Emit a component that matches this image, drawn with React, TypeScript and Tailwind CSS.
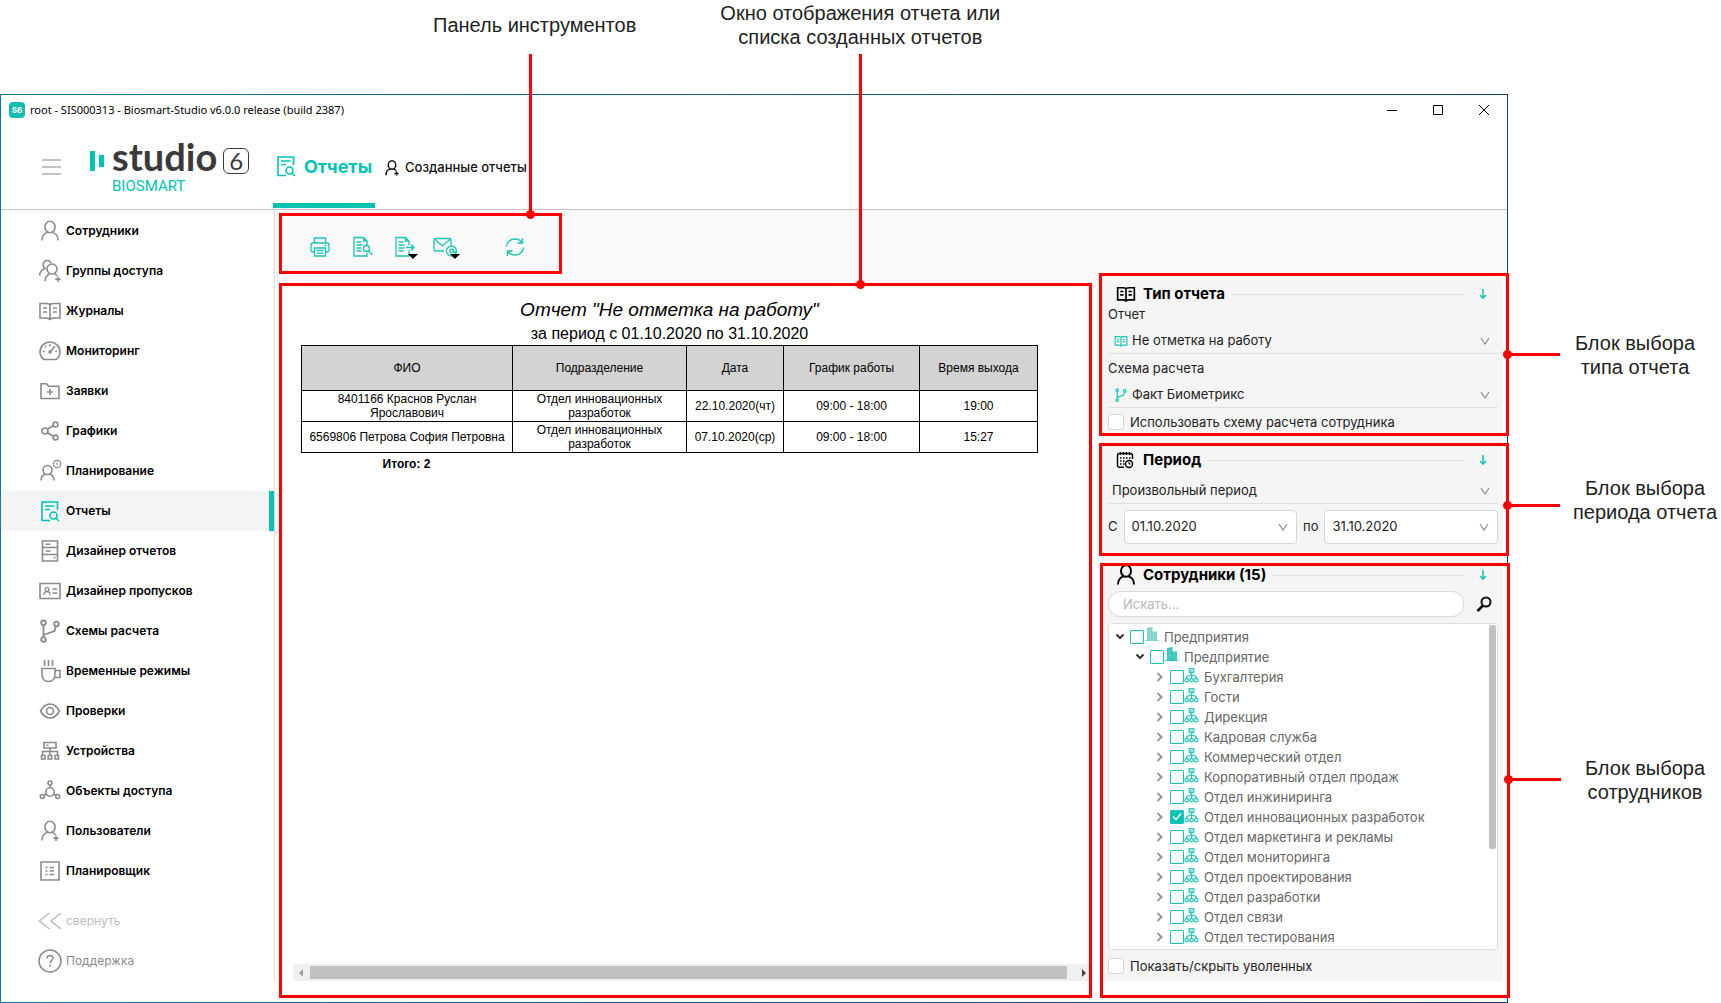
import type { ReactNode } from "react";

type IconProps = { className?: string };

function Svg({ box, className = "", width = 2, children }: { box: string; className?: string; width?: number; children: ReactNode }) {
  return (
    <svg viewBox={box} className={`shrink-0 ${className}`} fill="none" stroke="currentColor" strokeWidth={width} aria-hidden="true">
      {children}
    </svg>
  );
}

/* Sidebar icons, 24x24 grid */
const UserIcon = ({ className = "size-6" }: IconProps) => (
  <Svg box="0 0 24 24" className={className} width={1.6}>
    <ellipse cx="12" cy="8" rx="5" ry="5.8" />
    <path d="M4 21.5c0-4.5 2.5-7.5 5.5-8M20 21.5c0-4.5-2.5-7.5-5.5-8" />
  </Svg>
);

const UserPlusIcon = ({ className = "size-6" }: IconProps) => (
  <Svg box="0 0 24 24" className={className} width={1.6}>
    <ellipse cx="12" cy="8" rx="5" ry="5.8" />
    <path d="M4 21.5c0-4.5 2.5-7.5 5.5-8M14.5 13.5c1.5.5 2.5 1.5 3 2.5M18 16.5v5.5M15.2 19.2h5.6" />
  </Svg>
);

const GroupIcon = ({ className = "size-6" }: IconProps) => (
  <Svg box="0 0 24 24" className={className} width={1.6}>
    <circle cx="14" cy="10" r="5" />
    <path d="M13 4C12 1.500 9.500 1 7.500 1.800 5 3 4.500 6 6 8.500l1 1C4 10.500 2 13 1.500 16.500M7 22c.3-3.500 2-6 4.500-7M16.500 14.500c1 .5 2 1.500 2.500 2.500M20 17.500V23M17.200 20.200h5.600" />
  </Svg>
);

const BookIcon = ({ className = "size-6" }: IconProps) => (
  <Svg box="0 0 24 24" className={className} width={1.6}>
    <path d="M12 5.500C11 4.500 9.500 4.500 8 4.500H2v14.500h7.500l2.500 1.500 2.500-1.500H22V4.500h-6c-1.500 0-3 0-4 1v14.500M5 9h4M5 13h4M15 9h4M15 13h4" />
  </Svg>
);

const GaugeIcon = () => (
  <Svg box="0 0 24 24" className="size-6" width={1.6}>
    <path d="M6 20.500C3.500 18.800 2 16 2 12.800 2 7.200 6.500 3 12 3s10 4.200 10 9.800c0 3.200-1.500 6-4 7.700zM12 5.200v2M7 7l1 1.300M4.800 12.500h2M17.200 12.500h2M17 7.200L12 13" />
    <circle cx="12" cy="13" r="1" />
  </Svg>
);

const FolderPlusIcon = () => (
  <Svg box="0 0 24 24" className="size-6" width={1.6}>
    <path d="M3 19.500V4.800h5.500l2 2.500H21v12.200zM12 10v6M9 13h6" />
  </Svg>
);

const ShareIcon = () => (
  <Svg box="0 0 24 24" className="size-6" width={1.6}>
    <circle cx="7" cy="12" r="3" />
    <circle cx="17.5" cy="5.5" r="2.4" />
    <circle cx="17.5" cy="18.5" r="2.4" />
    <path d="M9.500 10.300l5.800-3.500M9.500 13.700l5.800 3.500" />
  </Svg>
);

const PlanningIcon = () => (
  <Svg box="0 0 24 24" className="size-6" width={1.6}>
    <circle cx="9.5" cy="11" r="4.5" />
    <path d="M3 21.500c0-3.500 1.500-5.500 4-6.500M16 21.500c0-3.500-1.500-5.500-4-6.500" />
    <circle cx="19" cy="5" r="3.7" strokeWidth={1.2} />
    <path d="M19 3v2l1.200 1" strokeWidth={1} />
  </Svg>
);

const ReportIcon = ({ className = "size-6" }: IconProps) => (
  <Svg box="0 0 24 24" className={className} width={1.6}>
    <path d="M12 21.500H4V3h15.500v8M7 7h9.500M7 10.500h5" />
    <circle cx="15.5" cy="16.5" r="3.5" />
    <path d="M18 19l3 3" />
  </Svg>
);

const DrawersIcon = () => (
  <Svg box="0 0 24 24" className="size-6" width={1.6}>
    <path d="M4.500 2h15v20h-15zM4.500 8.500h15M4.500 15.500h15M7.500 5.300h5M7.500 12h5M15.500 18.800h2" />
  </Svg>
);

const BadgeIcon = () => (
  <Svg box="0 0 24 24" className="size-6" width={1.6}>
    <path d="M2 4.500h20v15H2zM14.500 10h4.500M14.500 14h4.500" />
    <circle cx="9" cy="10.5" r="1.9" strokeWidth={1.3} />
    <path d="M6 16c0-2 1.200-3.300 3-3.300s3 1.300 3 3.300" strokeWidth={1.3} />
  </Svg>
);

const BranchIcon = ({ className = "size-6" }: IconProps) => (
  <Svg box="0 0 24 24" className={className} width={1.8}>
    <circle cx="5.5" cy="3.8" r="2.3" />
    <circle cx="5.5" cy="20.5" r="2.3" />
    <circle cx="18.5" cy="5" r="2.3" />
    <path d="M5.500 6v12M5.500 16l11-4 1.500-5" />
  </Svg>
);

const CupIcon = () => (
  <Svg box="0 0 24 24" className="size-6" width={1.6}>
    <path d="M4 9.500h13v6c0 4-2.500 7-6.500 7S4 19.500 4 15.500zM17 11.500h5v7h-5.500M6.500 1v6M10.500 1v6M14.500 1v6" />
  </Svg>
);

const EyeIcon = () => (
  <Svg box="0 0 24 24" className="size-6" width={1.6}>
    <path d="M2.500 12C5 7.500 8.500 5 12 5s7 2.500 9.500 7c-2.500 4.500-6 7-9.500 7s-7-2.500-9.500-7z" />
    <circle cx="12" cy="12" r="3.5" />
  </Svg>
);

const DevicesIcon = () => (
  <Svg box="0 0 24 24" className="size-6" width={1.6}>
    <path d="M6 3.500h12v5.500H6zM8.500 6.200h2M12 9v7M4.500 16v-3.500h15V16M3.500 16.500h3.500v3.500H3.500zM10.200 16.500h3.500v3.500h-3.500zM17 16.500h3.500v3.500H17z" />
  </Svg>
);

const ObjectsIcon = () => (
  <Svg box="0 0 24 24" className="size-6" width={1.6}>
    <circle cx="12" cy="13" r="4.2" />
    <circle cx="12" cy="4" r="2" />
    <circle cx="4.3" cy="17.5" r="2" />
    <circle cx="19.7" cy="17.5" r="2" />
    <path d="M12 6v3M6 16.500l2.500-1.500M18 16.500L15.500 15" />
  </Svg>
);

const SchedulerIcon = () => (
  <Svg box="0 0 24 24" className="size-6" width={1.6}>
    <path d="M3 3h18v18H3zM7.500 8.500h2M7.500 12h2M7.500 15.500h2M11.500 8.500H16M11.500 12H16M11.500 15.500H16" />
  </Svg>
);

/* Toolbar icons */
const PrintIcon = () => (
  <Svg box="0 0 22 22" className="size-[22px]" width={1.3}>
    <path d="M5.500 7V2h11v5M5 16H3.500C2.500 16 2 15.500 2 14.500v-5C2 8 2.800 7 4 7h14c1.200 0 2 1 2 2.500v5c0 1-.5 1.500-1.500 1.500H17M5.500 12h11v8h-11zM7.500 14.500h7M7.500 17.200h7M15.500 9.500h2" />
  </Svg>
);

const PreviewIcon = () => (
  <Svg box="0 0 22 22" className="size-[22px]" width={1.3}>
    <path d="M15 17v3H2V1.500h9.500L15 5v4M11.500 1.500V5H15M4.500 6h5M4.500 9h6M4.500 12h5M4.500 15h5" />
    <circle cx="14.5" cy="12.5" r="3" />
    <path d="M16.500 15l4 4" />
  </Svg>
);

const ExportIcon = () => (
  <Svg box="0 0 22 22" className="size-[22px]" width={1.3}>
    <path d="M15 14v6H2V1.500h9.500L15 5v4M11.500 1.500V5H15M4.500 6h5M4.500 9h6M4.500 12h6M4.500 15h5M12 11.500h8M17 8.500l3 3-3 3" />
  </Svg>
);

const MailIcon = () => (
  <Svg box="0 0 26 22" className="h-[22px] w-[26px]" width={1.3}>
    <path d="M12 15H3.500C2.500 15 2 14.500 2 13.500V4c0-1 .5-1.500 1.500-1.500h14c1 0 1.500.5 1.500 1.500v5M2.500 3l8 7 8-7" />
    <circle cx="19.5" cy="15" r="5" />
    <circle cx="19.5" cy="15" r="1.8" />
    <path d="M21.500 13v2.500c0 1.500 2.500 1.500 3-.5" />
  </Svg>
);

const RefreshIcon = () => (
  <Svg box="0 0 22 22" className="size-[22px]" width={1.4}>
    <path d="M2.500 10.500C2.800 6 6.500 3 11 3c3 0 5.500 1.300 7 3.500M18.500 2v5h-5M19.500 11.500c-.3 4.500-4 7.500-8.500 7.500-3 0-5.500-1.300-7-3.500M3.500 20v-5h5" />
  </Svg>
);

/* Caret under toolbar buttons that open a menu */
const MenuCaret = () => (
  <span className="absolute -right-0.5 -bottom-px border-x-[5px] border-t-[5px] border-x-transparent border-t-black" />
);

/* Right panel icons */
const CalendarIcon = () => (
  <Svg box="0 0 18 18" className="size-[18px] text-black" width={1.4}>
    <path d="M8 16.300H3.500C2.300 16.300 1.500 15.500 1.500 14.300V4.500c0-1.200.8-2 2-2h11c1.200 0 2 .8 2 2V8M4.500 1v3M7.500 1v3M10.500 1v3M13.500 1v3" />
    <path d="M4 7h1.500M7 7h1.500M10 7h1.500M13 7h1.500M4 10h1.500M7 10h1.500M4 13h1.500M7 13h1.500" />
    <circle cx="13" cy="13" r="3.5" />
    <path d="M13 11v2h1.500" strokeWidth={1} />
  </Svg>
);

const DownArrowIcon = () => (
  <Svg box="0 0 8 12" className="h-3 w-2 text-[#1cc4b4]" width={1.6}>
    <path d="M4 1v9M1 7l3 3 3-3" />
  </Svg>
);

const ChevronIcon = ({ className = "" }: IconProps) => (
  <Svg box="0 0 10 8" className={`h-2 w-2.5 text-[#8c8c8c] ${className}`} width={1.2}>
    <path d="M1 1l4 6 4-6" />
  </Svg>
);

const SearchIcon = () => (
  <Svg box="0 0 16 16" className="size-4 text-[#111]" width={2}>
    <circle cx="10" cy="6" r="4.5" />
    <path d="M7 9.500L1.500 15" strokeWidth={2.6} />
  </Svg>
);

const BuildingIcon = ({ className = "" }: IconProps) => (
  <svg viewBox="0 0 14 14" className={`h-3.5 w-3.5 shrink-0 self-start ${className}`} aria-hidden="true">
    <path d="M2 13V1l5.500-1v4.500H12V13h1.500v1H0v-1z" fill="currentColor" />
    <path d="M3.500 3.500H6M3.500 6H6M3.500 8.500H6M3.500 11H6M8 7h2.500M8 9h2.500M8 11h2.500" stroke="#fff" strokeWidth=".6" strokeDasharray="1 .5" opacity=".5" />
  </svg>
);

const OrgIcon = () => (
  <Svg box="0 0 15 15" className="-mt-1 size-[15px] text-[#2fc7b9]" width={1.3}>
    <path d="M5.300.7h4.400v3.800H5.300zM6.500 2.600h2M7.500 4.600V10M2.700 10.500V8.500L7.500 7l4.800 1.500v2" />
    <circle cx="2.7" cy="12.2" r="1.7" />
    <circle cx="7.5" cy="12.2" r="1.7" />
    <circle cx="12.3" cy="12.2" r="1.7" />
  </Svg>
);

const NAV = [
  { label: "Сотрудники", icon: UserIcon },
  { label: "Группы доступа", icon: GroupIcon },
  { label: "Журналы", icon: BookIcon },
  { label: "Мониторинг", icon: GaugeIcon },
  { label: "Заявки", icon: FolderPlusIcon },
  { label: "Графики", icon: ShareIcon },
  { label: "Планирование", icon: PlanningIcon },
  { label: "Отчеты", icon: ReportIcon, active: true },
  { label: "Дизайнер отчетов", icon: DrawersIcon },
  { label: "Дизайнер пропусков", icon: BadgeIcon },
  { label: "Схемы расчета", icon: BranchIcon },
  { label: "Временные режимы", icon: CupIcon },
  { label: "Проверки", icon: EyeIcon },
  { label: "Устройства", icon: DevicesIcon },
  { label: "Объекты доступа", icon: ObjectsIcon },
  { label: "Пользователи", icon: UserPlusIcon },
  { label: "Планировщик", icon: SchedulerIcon },
];

const ROWS = [
  ["8401166 Краснов Руслан Ярославович", "Отдел инновационных разработок", "22.10.2020(чт)", "09:00 - 18:00", "19:00"],
  ["6569806 Петрова София Петровна", "Отдел инновационных разработок", "07.10.2020(ср)", "09:00 - 18:00", "15:27"],
];

const DEPARTMENTS = [
  "Бухгалтерия",
  "Гости",
  "Дирекция",
  "Кадровая служба",
  "Коммерческий отдел",
  "Корпоративный отдел продаж",
  "Отдел инжиниринга",
  "Отдел инновационных разработок",
  "Отдел маркетинга и рекламы",
  "Отдел мониторинга",
  "Отдел проектирования",
  "Отдел разработки",
  "Отдел связи",
  "Отдел тестирования",
];

function Dot({ className }: { className: string }) {
  return <span className={`absolute size-[9px] rounded-full bg-[#ff0000] ${className}`} />;
}

/* Red outline around a block with a leader line to its caption on the right */
function Frame({ className, leader }: { className: string; leader: string }) {
  return (
    <div className={`pointer-events-none absolute z-10 border-[3px] border-[#ff0000] ${className}`}>
      <span className={`absolute left-full h-[3px] w-[54px] bg-[#ff0000] ${leader}`}>
        <Dot className="-top-[3px] -left-[3px]" />
      </span>
    </div>
  );
}

function SectionTitle({ icon, children }: { icon: ReactNode; children: ReactNode }) {
  return (
    <div className="flex h-5 items-center pl-2">
      <span className="flex w-[27px] items-center text-black">{icon}</span>
      <h2 className="text-[15px] leading-5 font-bold text-black">{children}</h2>
      <span className="mr-[13px] ml-1.5 h-px flex-1 bg-[#e2e2e2]" />
      <button type="button" aria-label="Свернуть блок" className="mr-[11px]">
        <DownArrowIcon />
      </button>
    </div>
  );
}

function SelectRow({ id, label, value, icon }: { id: string; label?: string; value: string; icon?: ReactNode }) {
  return (
    <div className="relative flex h-[30px] items-center border-b border-[#e0e0e0] pt-1">
      {icon && <span className="ml-1.5 flex w-3.5 items-center text-[#1cc4b4]">{icon}</span>}
      <select id={id} aria-label={label} className="h-6 flex-1 appearance-none bg-transparent pl-1 text-[13px] text-[#222]">
        <option>{value}</option>
      </select>
      <ChevronIcon className="pointer-events-none absolute right-2" />
    </div>
  );
}

function DateField({ id, value, label }: { id: string; value: string; label: string }) {
  return (
    <>
      <label htmlFor={id} className="text-[13px]">{label}</label>
      <div className="flex h-full min-w-0 flex-1 items-center rounded border border-[#d6d6d6] bg-white pr-2">
        <input id={id} defaultValue={value} className="min-w-0 flex-1 bg-transparent pl-[7px] text-[13px] text-[#222] outline-none" />
        <button type="button" aria-label="Открыть календарь"><ChevronIcon /></button>
      </div>
    </>
  );
}

function CheckRow({ id, children }: { id: string; children: ReactNode }) {
  return (
    <div className="flex h-4 items-center gap-1.5">
      <input id={id} type="checkbox" className="size-4 appearance-none rounded-xs border border-[#d6d6d6] bg-white" />
      <label htmlFor={id} className="text-[13px] leading-4 text-[#222]">{children}</label>
    </div>
  );
}

function TreeRow({ id, label, level, open, checked, icon }: { id: string; label: string; level: 0 | 1 | 2; open?: boolean; checked?: boolean; icon: ReactNode }) {
  const indent = ["pl-1.5", "pl-[26px]", "pl-[46px]"][level];
  return (
    <li className={`flex h-5 items-center ${indent}`}>
      <button type="button" aria-label={open ? "Свернуть" : "Развернуть"} className="flex w-[15px] justify-start">
        {open ? (
          <Svg box="0 0 10 8" className="h-2 w-2.5 text-[#333]" width={2}>
            <path d="M1.500 1.500L5 5l3.500-3.500" />
          </Svg>
        ) : (
          <Svg box="0 0 8 10" className="ml-px h-2.5 w-2 text-[#999]" width={2}>
            <path d="M1.500 1L5.500 5 1.500 9" />
          </Svg>
        )}
      </button>
      <span className="relative flex">
        <input
          id={id}
          type="checkbox"
          defaultChecked={checked}
          className="peer size-3.5 appearance-none rounded-[1px] border border-[#1cc4b4] bg-white checked:bg-[#00c4b3]"
        />
        <Svg box="0 0 14 14" className="pointer-events-none absolute inset-0 hidden size-3.5 text-white peer-checked:block" width={1.5}>
          <path d="M3 6.500L6 9.500l5-6" />
        </Svg>
      </span>
      {icon}
      <label htmlFor={id} className="ml-[5px] text-[13px] leading-5 whitespace-nowrap text-[#666]">{label}</label>
    </li>
  );
}

function Header() {
  return (
    <header className="flex h-[85px] border-b border-[#c4c4c4]">
      <button type="button" aria-label="Меню" className="mt-[34px] ml-[41px] flex h-4 w-[19px] flex-col justify-between self-start">
        <span className="h-0.5 w-full bg-[#c2c2c2]" />
        <span className="h-0.5 w-full bg-[#c2c2c2]" />
        <span className="h-0.5 w-full bg-[#c2c2c2]" />
      </button>
      <div className="ml-7 flex w-[184px] pt-[9px]">
        <div className="ml-px flex gap-1 pt-[17px]">
          <span className="h-5 w-[5px] bg-[#00c4b3]" />
          <span className="mt-1 h-3 w-[5px] bg-[#00c4b3]" />
        </div>
        <div className="ml-2">
          <div className="flex h-11 items-center gap-1.5">
            <span className="font-[Lato] text-[38px] leading-11 font-bold text-[#3a3a3a]">studio</span>
            <span className="mt-2.5 flex h-[26px] w-[26px] items-center justify-center rounded-md border border-[#3a3a3a] font-[Lato] text-[24px] leading-6 text-[#3a3a3a]">6</span>
          </div>
          <div className="font-[Roboto] text-[15px] leading-4 text-[#00c4b3]">BIOSMART</div>
        </div>
      </div>
      <nav className="flex">
        <a href="#reports" className="relative flex w-[102px] items-center gap-1.5 pb-0.5 pl-px text-[18px] font-bold text-[#00c4b3]">
          <ReportIcon className="size-6" />
          Отчеты
          <span className="absolute inset-x-0 bottom-px h-[5px] bg-[#00c4b3]" />
        </a>
        <a href="#created" className="ml-2 flex items-center gap-1 pt-px text-[13px] font-medium whitespace-nowrap text-[#111]">
          <UserPlusIcon className="size-[18px] stroke-2" />
          Созданные отчеты
        </a>
      </nav>
    </header>
  );
}

function Sidebar() {
  return (
    <aside className="mb-[21px] w-[274px] shrink-0 border-r border-[#dedede] pt-px">
      <nav>
        {NAV.map(item => {
          const Icon = item.icon;
          return (
            <a
              key={item.label}
              href="#nav"
              className={`flex h-10 items-center gap-1 pl-[37px] text-[12px] font-semibold text-black ${item.active ? "border-r-[5px] border-[#00c4b3] bg-[#f4f4f4]" : ""}`}
            >
              <span className={item.active ? "text-[#00c4b3]" : "text-[#8a8a8a]"}>
                <Icon />
              </span>
              {item.label}
            </a>
          );
        })}
      </nav>
      <button type="button" className="mt-2.5 flex h-10 w-full items-center gap-1 pl-[37px] text-[12px] text-[#bdbdbd]">
        <Svg box="0 0 24 24" className="size-6" width={1.6}>
          <path d="M11.500 4L1.500 12l10 8M23 4l-10 8 10 8" />
        </Svg>
        свернуть
      </button>
      <a href="#support" className="flex h-10 items-center gap-1 pl-[37px] text-[12px] text-[#8a8a8a]">
        <Svg box="0 0 24 24" className="size-6" width={1.5}>
          <circle cx="12" cy="12" r="11" />
          <path d="M9 9.500C9 7.500 10.200 6.500 12 6.500s3 1.200 3 2.800c0 2-3 2.200-3 5M12 15.800v2" />
        </Svg>
        Поддержка
      </a>
    </aside>
  );
}

function Toolbar() {
  return (
    <div className="h-[71px] bg-[#f9f9f9] pt-[3px] pl-1">
      <div className="relative flex h-[61px] w-[283px] items-center border-[3px] border-[#ff0000] pt-1.5 pl-[27px] text-[#1cc4b4]">
        <button type="button" aria-label="Печать"><PrintIcon /></button>
        <button type="button" aria-label="Просмотр" className="ml-[21px]"><PreviewIcon /></button>
        <button type="button" aria-label="Экспорт" className="relative ml-5">
          <ExportIcon />
          <MenuCaret />
        </button>
        <button type="button" aria-label="Отправить" className="relative ml-4">
          <MailIcon />
          <MenuCaret />
        </button>
        <button type="button" aria-label="Обновить" className="ml-[46px]"><RefreshIcon /></button>
        <span className="absolute -top-[162px] left-[247px] h-[162px] w-[3px] bg-[#ff0000]">
          <Dot className="-bottom-[3px] -left-[3px]" />
        </span>
      </div>
    </div>
  );
}

function Report() {
  return (
    <section className="relative mt-0.5 mr-[9px] mb-1 ml-1 flex min-w-0 flex-1 flex-col border-[3px] border-[#ff0000] pl-[11px] font-['Liberation_Sans',Arial,sans-serif] text-black">
      <span className="absolute -top-[232px] left-[577px] h-[232px] w-[3px] bg-[#ff0000]">
        <Dot className="-bottom-[3px] -left-[3px]" />
      </span>
      <div className="ml-2 w-[737px] pt-3 text-center">
        <h1 className="text-[19px] leading-6 italic">Отчет "Не отметка на работу"</h1>
        <p className="mt-px text-[16px] leading-[22px]">за период с 01.10.2020 по 31.10.2020</p>
        <table className="w-full table-fixed border-collapse text-[12px] leading-[14px]">
          <colgroup>
            <col className="w-[211px]" />
            <col className="w-[174px]" />
            <col className="w-[97px]" />
            <col className="w-[136px]" />
            <col />
          </colgroup>
          <thead>
            <tr className="h-[45px] bg-[#d3d3d3]">
              {["ФИО", "Подразделение", "Дата", "График работы", "Время выхода"].map(h => (
                <th key={h} className="border border-black font-normal">{h}</th>
              ))}
            </tr>
          </thead>
          <tbody>
            {ROWS.map(row => (
              <tr key={row[0]} className="h-[31px]">
                {row.map((cell, i) => (
                  <td key={i} className={`border border-black ${i === 1 ? "px-5" : "px-1"}`}>{cell}</td>
                ))}
              </tr>
            ))}
          </tbody>
        </table>
        <p className="w-[211px] pt-[3px] text-[12px] leading-4 font-bold">Итого: 2</p>
      </div>
      <div className="mt-auto mb-3.5 flex h-[17px] items-center bg-[#f0f0f0] pr-[3px] pl-1.5">
        <span className="border-y-4 border-r-4 border-y-transparent border-r-[#a0a0a0]" />
        <span className="mr-[15px] ml-[7px] h-[13px] flex-1 bg-[#c1c1c1]" />
        <span className="border-y-4 border-l-4 border-y-transparent border-l-[#444]" />
      </div>
    </section>
  );
}

function SidePanel() {
  return (
    <aside className="mr-1 mb-[21px] flex w-[402px] shrink-0 flex-col bg-[#f5f5f5]">
      <section className="relative pt-[3px] pr-[5px] pb-2.5 pl-[7px]">
        <Frame className="-top-2 -right-1.5 bottom-1 -left-0.5" leader="top-[77px]" />
        <SectionTitle icon={<BookIcon className="size-5 stroke-2" />}>Тип отчета</SectionTitle>
        <label htmlFor="report-type" className="block text-[13px] leading-5 text-[#222]">Отчет</label>
        <SelectRow id="report-type" value="Не отметка на работу" icon={<BookIcon className="size-3.5 stroke-2" />} />
        <label htmlFor="scheme" className="mt-1 block text-[13px] leading-5 text-[#222]">Схема расчета</label>
        <SelectRow id="scheme" value="Факт Биометрикс" icon={<BranchIcon className="size-3.5 stroke-2" />} />
        <div className="mt-1.5">
          <CheckRow id="own-scheme">Использовать схему расчета сотрудника</CheckRow>
        </div>
      </section>

      <section className="relative pt-2.5 pr-[5px] pb-4 pl-[7px]">
        <Frame className="top-[3px] -right-1.5 bottom-1 -left-0.5" leader="top-[58px]" />
        <SectionTitle icon={<CalendarIcon />}>Период</SectionTitle>
        <div className="mt-1">
          <SelectRow id="period" label="Период" value="Произвольный период" />
        </div>
        <div className="mt-1.5 flex h-[34px] items-center gap-1.5">
          <DateField id="from" label="С" value="01.10.2020" />
          <DateField id="to" label="по" value="31.10.2020" />
        </div>
      </section>

      <section className="relative flex min-h-0 flex-1 flex-col pt-[5px] pr-[5px] pb-[7px] pl-[7px]">
        <Frame className="top-[3px] -right-[7px] -bottom-[17px] -left-px" leader="top-[212px]" />
        <SectionTitle icon={<UserIcon className="-ml-0.5 size-6 stroke-2" />}>Сотрудники (15)</SectionTitle>
        <div className="mt-1.5 flex items-center">
          <input
            type="search"
            aria-label="Поиск сотрудников"
            placeholder="Искать..."
            className="h-[26px] min-w-0 flex-1 rounded-xl border border-[#d9d9d9] bg-white px-3.5 text-[13px] outline-none placeholder:text-[#b8b8b8]"
          />
          <button type="button" aria-label="Найти" className="mr-1.5 ml-3"><SearchIcon /></button>
        </div>
        <div className="relative mt-1.5 flex-1 overflow-hidden rounded border border-[#dedede] bg-white pt-[3px]">
          <ul>
            <TreeRow id="t-root" label="Предприятия" level={0} open icon={<BuildingIcon className="ml-px text-[#7fd3cb]" />} />
            <TreeRow id="t-org" label="Предприятие" level={1} open icon={<BuildingIcon className="ml-px text-[#35c8ba]" />} />
            {DEPARTMENTS.map((name, i) => (
              <TreeRow key={name} id={`dep-${i}`} label={name} level={2} checked={i === 7} icon={<OrgIcon />} />
            ))}
          </ul>
          <span className="absolute top-px right-px h-[224px] w-[7px] rounded-xs bg-[#c1c1c1]" />
        </div>
        <div className="mt-2">
          <CheckRow id="fired">Показать/скрыть уволенных</CheckRow>
        </div>
      </section>
    </aside>
  );
}

export default function App() {
  return (
    <div className="flex min-h-screen flex-col bg-white pb-px font-[Inter,'Open_Sans',sans-serif] text-[#222]">
      <div className="flex h-[94px] pt-px font-['Liberation_Sans',Arial,sans-serif] text-[20px] leading-6">
        <p className="ml-[433px] pt-3">Панель инструментов</p>
        <p className="ml-[79px] w-[290px] text-center">Окно отображения отчета или списка созданных отчетов</p>
      </div>
      <div className="flex flex-1">
        <div className="flex min-w-0 flex-1 bg-linear-to-r from-[#0f7cab] to-[#123a78] p-px">
          <div className="flex min-w-0 flex-1 flex-col bg-white">
            <div className="flex h-[30px] items-center pl-2 text-black">
              <span className="flex size-4 items-center justify-center rounded bg-[#12bfae] text-[8px] font-bold text-white">S6</span>
              <span className="ml-[5px] font-['Noto_Sans',sans-serif] text-[11px]">root - SIS000313 - Biosmart-Studio v6.0.0 release (build 2387)</span>
              <div className="mr-[18px] ml-auto flex gap-9">
                <button type="button" aria-label="Свернуть окно">
                  <Svg box="0 0 10 10" className="size-2.5" width={1}><path d="M0 5.500h10" /></Svg>
                </button>
                <button type="button" aria-label="Развернуть окно">
                  <Svg box="0 0 10 10" className="size-2.5" width={1}><path d="M.5.500h9v9h-9z" /></Svg>
                </button>
                <button type="button" aria-label="Закрыть окно">
                  <Svg box="0 0 10 10" className="size-2.5" width={1}><path d="M0 0l10 10M10 0L0 10" /></Svg>
                </button>
              </div>
            </div>
            <Header />
            <div className="flex min-h-0 flex-1">
              <Sidebar />
              <main className="flex min-w-0 flex-1 flex-col">
                <Toolbar />
                <div className="flex min-h-0 flex-1">
                  <Report />
                  <SidePanel />
                </div>
              </main>
            </div>
          </div>
        </div>
        <aside className="w-[213px] shrink-0 text-center font-['Liberation_Sans',Arial,sans-serif] text-[20px] leading-6">
          <p className="mr-5 ml-[61px] pt-[237px]">Блок выбора типа отчета</p>
          <p className="ml-[61px] pt-[97px]">Блок выбора периода отчета</p>
          <p className="ml-[61px] pt-[232px]">Блок выбора сотрудников</p>
        </aside>
      </div>
    </div>
  );
}
